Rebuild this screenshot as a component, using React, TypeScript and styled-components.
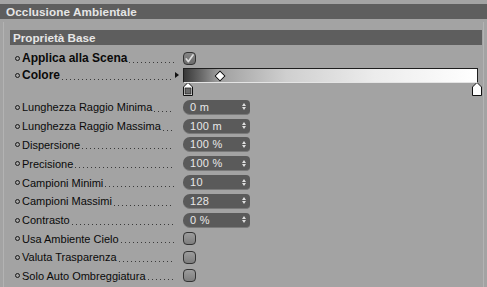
import React from "react";
import styled, { createGlobalStyle } from "styled-components";

const Global = createGlobalStyle`
  html, body { margin: 0; padding: 0; background: #a3a3a3; }
  body { font-family: "Liberation Sans", Arial, sans-serif; }
`;

const Page = styled.div`
  width: 487px;
  height: 287px;
  overflow: hidden;
  background: #a3a3a3;
  padding-top: 4px;
  box-sizing: border-box;
`;

const TitleBar = styled.div`
  height: 15px;
  line-height: 15px;
  background: #5e5e5e;
  color: #e6e6e6;
  font-weight: bold;
  font-size: 11.7px;
  padding-left: 6px;
  letter-spacing: 0.1px;
`;

const Panel = styled.div`
  margin: 3px 3px 0 3px;
  padding: 8px 1px 0 6px;
  border-left: 1px solid #b3b3b3;
  border-right: 1px solid #b3b3b3;
  height: 270px;
  box-sizing: border-box;
`;

const SectionBar = styled.div`
  height: 15px;
  line-height: 15px;
  background: #5e5e5e;
  color: #e6e6e6;
  font-weight: bold;
  font-size: 11.7px;
  padding-left: 3px;
  margin-bottom: 4px;
`;

const Row = styled.div<{ $h: number }>`
  display: flex;
  align-items: center;
  height: ${(p) => p.$h}px;
`;

const LabelArea = styled.div<{ $bold?: boolean; $tight?: boolean }>`
  width: 173px;
  flex: none;
  display: flex;
  align-items: center;
  padding-right: ${(p) => (p.$tight ? 4 : 9)}px;
  box-sizing: border-box;
  font-size: ${(p) => (p.$bold ? "12px" : "11px")};
  font-weight: ${(p) => (p.$bold ? "bold" : "normal")};
  color: #0a0a0a;
  white-space: nowrap;
`;

const Bullet = styled.span`
  width: 5px;
  height: 5px;
  border: 1px solid #1a1a1a;
  border-radius: 50%;
  box-sizing: border-box;
  margin: 0 2px 0 5px;
  flex: none;
`;

const Leader = styled.span`
  flex: 1;
  height: 1px;
  margin-top: 8px;
  margin-left: 2px;
  background-image: linear-gradient(to right, #3a3a3a 1px, transparent 1px);
  background-size: 4px 1px;
  background-repeat: repeat-x;
`;

const Arrow = styled.span`
  width: 0;
  height: 0;
  border-top: 3px solid transparent;
  border-bottom: 3px solid transparent;
  border-left: 4px solid #111;
  margin-left: 1px;
  flex: none;
`;

const Check = styled.div<{ $on?: boolean }>`
  width: 13px;
  height: 13px;
  box-sizing: border-box;
  border: 1px solid #333;
  border-radius: 4px;
  background: ${(p) =>
    p.$on
      ? "linear-gradient(#858585, #6c6c6c)"
      : "linear-gradient(#9c9c9c, #7e7e7e)"};
  display: flex;
  align-items: center;
  justify-content: center;
`;

const Spinner = styled.div`
  width: 67px;
  height: 15px;
  box-sizing: border-box;
  background: #5a5a5a;
  border-radius: 7px 4px 4px 7px;
  border-bottom: 1px solid #7a7a7a;
  color: #e8e8e8;
  font-size: 11px;
  display: flex;
  align-items: center;
  padding: 0 4px 0 7px;
`;

const SpinValue = styled.span`
  flex: 1;
  letter-spacing: 0.3px;
`;

const SpinArrows = styled.span`
  display: flex;
  flex-direction: column;
  gap: 1px;
`;

const Tri = styled.span<{ $up?: boolean }>`
  width: 0;
  height: 0;
  border-left: 2.5px solid transparent;
  border-right: 2.5px solid transparent;
  ${(p) => (p.$up ? "border-bottom: 3px solid #e0e0e0;" : "border-top: 3px solid #e0e0e0;")}
`;

const Gradient = styled.div`
  position: relative;
  width: 295px;
  height: 15px;
  box-sizing: border-box;
  border: 1px solid #1e1e1e;
  border-bottom-color: #e4e4e4;
  background: linear-gradient(
    to right,
    #383838 0%,
    #6a6a6a 6%,
    #a0a0a0 12%,
    #cfcfcf 35%,
    #ececec 65%,
    #ffffff 100%
  );
`;

const Diamond = styled.span`
  position: absolute;
  left: 32px;
  top: 3px;
  width: 6px;
  height: 6px;
  background: #fff;
  border: 1px solid #111;
  transform: rotate(45deg);
`;

const KnotRow = styled.div`
  display: flex;
  justify-content: space-between;
  width: 299px;
  margin-left: 173px;
  height: 14px;
  margin-bottom: 1px;
`;

const KnotSvg = styled.svg`
  display: block;
  margin-top: -1px;
`;

const Knot = ({ dark }: { dark?: boolean }) => (
  <KnotSvg width="10" height="14" viewBox="0 0 10 14">
    <path d="M5 0.5 L9.5 5 L9.5 13.5 L0.5 13.5 L0.5 5 Z" fill="#fff" stroke="#111" strokeWidth="1" />
    {dark && <rect x="2" y="6" width="6" height="6" fill="#6a6a6a" stroke="#222" strokeWidth="0.8" />}
  </KnotSvg>
);

const CheckMark = () => (
  <svg width="9" height="9" viewBox="0 0 9 9">
    <path d="M1.3 5 L3.4 7.6 L8 1" fill="none" stroke="#dcdcdc" strokeWidth="1.7" strokeLinecap="round" strokeLinejoin="round" />
  </svg>
);

const spinners: [string, string][] = [
  ["Lunghezza Raggio Minima", "0 m"],
  ["Lunghezza Raggio Massima", "100 m"],
  ["Dispersione", "100 %"],
  ["Precisione", "100 %"],
  ["Campioni Minimi", "10"],
  ["Campioni Massimi", "128"],
  ["Contrasto", "0 %"],
];

const checks = ["Usa Ambiente Cielo", "Valuta Trasparenza", "Solo Auto Ombreggiatura"];

export default function App() {
  return (
    <Page>
      <Global />
      <TitleBar>Occlusione Ambientale</TitleBar>
      <Panel>
        <SectionBar>Proprietà Base</SectionBar>
        <Row $h={18}>
          <LabelArea $bold>
            <Bullet />
            Applica alla Scena
            <Leader />
          </LabelArea>
          <Check $on>
            <CheckMark />
          </Check>
        </Row>
        <Row $h={16}>
          <LabelArea $bold $tight>
            <Bullet />
            Colore
            <Leader />
            <Arrow />
          </LabelArea>
          <Gradient>
            <Diamond />
          </Gradient>
        </Row>
        <KnotRow>
          <Knot dark />
          <Knot />
        </KnotRow>
        {spinners.map(([label, value]) => (
          <Row $h={18.8} key={label}>
            <LabelArea>
              <Bullet />
              {label}
              <Leader />
            </LabelArea>
            <Spinner>
              <SpinValue>{value}</SpinValue>
              <SpinArrows>
                <Tri $up />
                <Tri />
              </SpinArrows>
            </Spinner>
          </Row>
        ))}
        {checks.map((label) => (
          <Row $h={18.4} key={label}>
            <LabelArea>
              <Bullet />
              {label}
              <Leader />
            </LabelArea>
            <Check />
          </Row>
        ))}
      </Panel>
    </Page>
  );
}
